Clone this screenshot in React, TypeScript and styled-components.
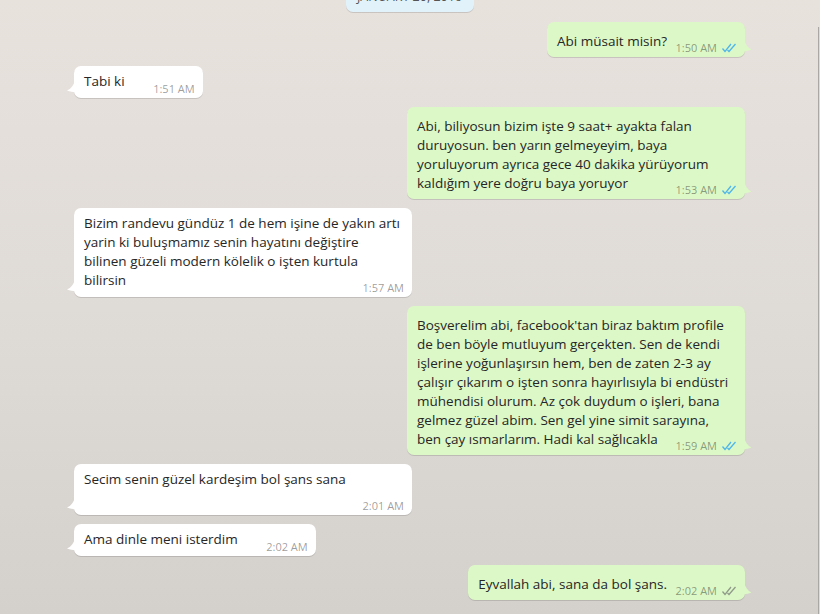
import { createGlobalStyle, styled } from "styled-components"

const GlobalStyle = createGlobalStyle`
  html, body {
    margin: 0;
    padding: 0;
  }
  body {
    font-family: "Open Sans", "Noto Sans", "Liberation Sans", sans-serif;
    color: #262626;
  }
`

interface Message {
    out: boolean
    text: string
    time: string
    read?: boolean
}

const messages: Message[] = [
    { out: true, text: "Abi müsait misin?", time: "1:50 AM", read: true },
    { out: false, text: "Tabi ki", time: "1:51 AM" },
    {
        out: true,
        text: "Abi, biliyosun bizim işte 9 saat+ ayakta falan duruyosun. ben yarın gelmeyeyim, baya yoruluyorum ayrıca gece 40 dakika yürüyorum kaldığım yere doğru baya yoruyor",
        time: "1:53 AM",
        read: true,
    },
    {
        out: false,
        text: "Bizim randevu gündüz 1 de hem işine de yakın artı yarin ki buluşmamız senin hayatını değiştire bilinen güzeli modern kölelik o işten kurtula bilirsin",
        time: "1:57 AM",
    },
    {
        out: true,
        text: "Boşverelim abi, facebook'tan biraz baktım profile de ben böyle mutluyum gerçekten. Sen de kendi işlerine yoğunlaşırsın hem, ben de zaten 2-3 ay çalışır çıkarım o işten sonra hayırlısıyla bi endüstri mühendisi olurum. Az çok duydum o işleri, bana gelmez güzel abim. Sen gel yine simit sarayına, ben çay ısmarlarım. Hadi kal sağlıcakla",
        time: "1:59 AM",
        read: true,
    },
    { out: false, text: "Secim senin güzel kardeşim bol şans sana", time: "2:01 AM" },
    { out: false, text: "Ama dinle meni isterdim", time: "2:02 AM" },
    { out: true, text: "Eyvallah abi, sana da bol şans.", time: "2:02 AM", read: false },
]

const Page = styled.div`
  display: flex;
  height: 614px;
  overflow: hidden;
  background: linear-gradient(180deg, #e8e2dd 0%, #dfdbd7 50%, #d4d0cc 100%);
`

const ChatPane = styled.div`
  flex: 1;
  display: flex;
  flex-direction: column;
  gap: 9px;
  padding: 0 73px 0 74px;
`

const Edge = styled.div`
  width: 1px;
  margin-top: 27px;
  border-left: 1px solid #a9a8a4;
  background: #dedad6;
`

const DateRow = styled.div`
  display: flex;
  justify-content: center;
  margin-top: -19px;
  margin-bottom: 1px;
`

const DatePill = styled.div`
  padding: 5px 0;
  width: 128px;
  text-align: center;
  background: #e1f2fb;
  border-radius: 7px;
  box-shadow: 0 1px 0.5px rgba(0, 0, 0, 0.13);
  font-size: 12.5px;
  line-height: 21px;
  color: #555;
`

const Row = styled.div<{ $out: boolean }>`
  display: flex;
  justify-content: ${(p) => (p.$out ? "flex-end" : "flex-start")};
`

const Bubble = styled.div<{ $out: boolean }>`
  position: relative;
  max-width: 318px;
  padding: ${(p) => (p.$out ? "10px 10px 6px 10px" : "6px 10px 7px 10px")};
  border-radius: 7px;
  background: ${(p) => (p.$out ? "#dcf8c6" : "#ffffff")};
  box-shadow: 0 1px 0.5px rgba(0, 0, 0, 0.13);
  font-size: 13.5px;
  line-height: 19px;
`

const Spacer = styled.span`
  display: inline-block;
  width: 68px;
`

const Meta = styled.div`
  position: absolute;
  right: 8px;
  bottom: 2px;
  display: flex;
  align-items: center;
  gap: 4px;
  font-size: 11px;
  line-height: 15px;
  color: rgba(0, 0, 0, 0.4);
  white-space: nowrap;
`

const Tail = styled.svg<{ $out: boolean }>`
  position: absolute;
  bottom: 4px;
  ${(p) => (p.$out ? "right: -7px;" : "left: -8px;")}
`

function Checks({ read }: { read: boolean }) {
    const c = read ? "#4fb6ec" : "#8f9a8a"
    return (
        <svg width="16" height="10" viewBox="0 0 16 10">
            <path d="M1.5 5.5 L4 8.5 L10 1" fill="none" stroke={c} strokeWidth="1.3" />
            <path d="M6.5 7 L8 8.5 L14.5 1" fill="none" stroke={c} strokeWidth="1.3" />
        </svg>
    )
}

function App() {
    return (
        <Page>
            <GlobalStyle />
            <ChatPane>
                <DateRow>
                    <DatePill>JANUARY 20, 2016</DatePill>
                </DateRow>
                {messages.map((m, i) => (
                    <Row $out={m.out} key={i}>
                        <Bubble $out={m.out}>
                            {m.out ? (
                                <Tail $out width="8" height="14" viewBox="0 0 8 14">
                                    <path d="M0 0 C1 5 4 9 7.5 10.5 C5 11.5 2 12 0 12.5 Z" fill="#dcf8c6" />
                                </Tail>
                            ) : (
                                <Tail $out={false} width="9" height="14" viewBox="0 0 9 14">
                                    <path d="M9 0 C8 5 5 9 1 10.5 C4 11.5 7 12 9 12.5 Z" fill="#ffffff" />
                                </Tail>
                            )}
                            {m.text}
                            <Spacer />
                            <Meta>
                                <span>{m.time}</span>
                                {m.out && <Checks read={!!m.read} />}
                            </Meta>
                        </Bubble>
                    </Row>
                ))}
            </ChatPane>
            <Edge />
        </Page>
    )
}

export default App
